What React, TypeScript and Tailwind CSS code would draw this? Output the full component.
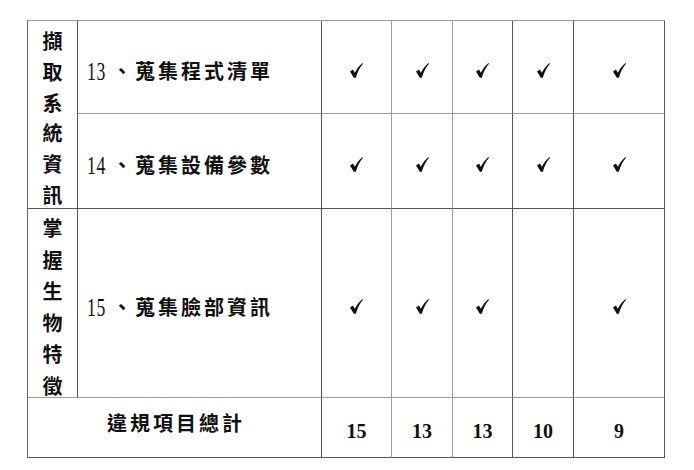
import React from "react";

const LIGHT = "border-[#9c9c9c]";

function Check() {
  return (
    <svg width="13" height="15" viewBox="0 0 13 15" className="block">
      <path
        d="M0 8.4 L3 6.6 L4.8 9.8 C6.6 6.2 9.2 2.8 12.4 0 L13 0.8 C10 4.2 7.6 8.6 5.8 14.8 L3.8 14.8 Z"
        fill="#111"
      />
    </svg>
  );
}

const font = { fontFamily: '"Liberation Serif", "Noto Sans CJK TC", serif' };

function VChars({ text, cls }: { text: string; cls: string }) {
  return (
    <div className={`flex flex-col items-center justify-between ${cls}`}>
      {text.split("").map((c, i) => (
        <span key={i} className="block text-[20px] leading-[20px] font-bold text-[#111]">
          {c}
        </span>
      ))}
    </div>
  );
}

function ItemText({ num, text }: { num: string; text: string }) {
  return (
    <div className="h-full flex items-center pl-[9px] pt-[9px] text-[20px] leading-none tracking-[3px] text-[#111]">
      <span className="inline-block w-[25px] h-[20px] relative">
        <span className="absolute left-0 top-[-3px] text-[26px] leading-[26px] tracking-[1px] font-normal scale-x-[0.68] origin-left whitespace-nowrap">
          {num}
        </span>
      </span>
      <span className="font-bold">、{text}</span>
    </div>
  );
}

export default function App() {
  const colBorder = [
    "border-[#555]",
    "border-[#555]",
    "border-r-[#9c9c9c]",
    "border-r-[#9c9c9c]",
    "border-r-[#555]",
    "border-r-[#555]",
    "border-r-[#555]",
  ];
  const rows = [
    { num: "13", text: "蒐集程式清單", checks: [true, true, true, true, true], bottom: "border-b-[#9c9c9c]" },
    { num: "14", text: "蒐集設備參數", checks: [true, true, true, true, true], bottom: "border-b-[#555]" },
    { num: "15", text: "蒐集臉部資訊", checks: [true, true, true, false, true], bottom: "border-b-[#9c9c9c]" },
  ];
  const totals = ["15", "13", "13", "10", "9"];

  return (
    <div className="w-[694px] h-[470px] bg-white pt-[20px] pl-[27px]" style={font}>
      <div
        className={`grid grid-cols-[50px_244px_70px_61px_60px_61px_91px] grid-rows-[93px_95px_189px_60px] w-[638px] border-t border-l ${LIGHT} border-l-[#666]`}
      >
        <div className="row-span-2 col-start-1 row-start-1 border-r border-b border-[#555] pt-[11px] pb-[2px]">
          <VChars text="擷取系統資訊" cls="h-full" />
        </div>
        <div className="col-start-1 row-start-3 border-r border-b border-[#555] border-b-[#9c9c9c] pt-[10px] pb-0">
          <VChars text="掌握生物特徵" cls="h-full" />
        </div>

        {rows.map((r, ri) => (
          <React.Fragment key={ri}>
            <div
              className={`col-start-2 border-r border-b border-r-[#555] ${r.bottom}`}
              style={{ gridRowStart: ri + 1 }}
            >
              <ItemText num={r.num} text={r.text} />
            </div>
            {r.checks.map((c, ci) => (
              <div
                key={ci}
                className={`flex items-center justify-center pt-[6px] border-r border-b ${colBorder[ci + 2]} ${r.bottom}`}
                style={{ gridRowStart: ri + 1, gridColumnStart: ci + 3 }}
              >
                {c ? <Check /> : null}
              </div>
            ))}
          </React.Fragment>
        ))}

        <div className="col-span-2 col-start-1 row-start-4 flex items-center justify-center pb-[8px] border-r border-b border-[#555]">
          <span className="text-[20px] leading-none font-bold tracking-[3px] text-[#111] pl-[3px]">違規項目總計</span>
        </div>
        {totals.map((t, ti) => (
          <div
            key={ti}
            className={`row-start-4 flex items-center justify-center pt-[6px] border-r border-b border-b-[#555] ${colBorder[ti + 2]}`}
            style={{ gridColumnStart: ti + 3 }}
          >
            <span className="text-[20px] leading-none font-bold text-[#111]">{t}</span>
          </div>
        ))}
      </div>
    </div>
  );
}
